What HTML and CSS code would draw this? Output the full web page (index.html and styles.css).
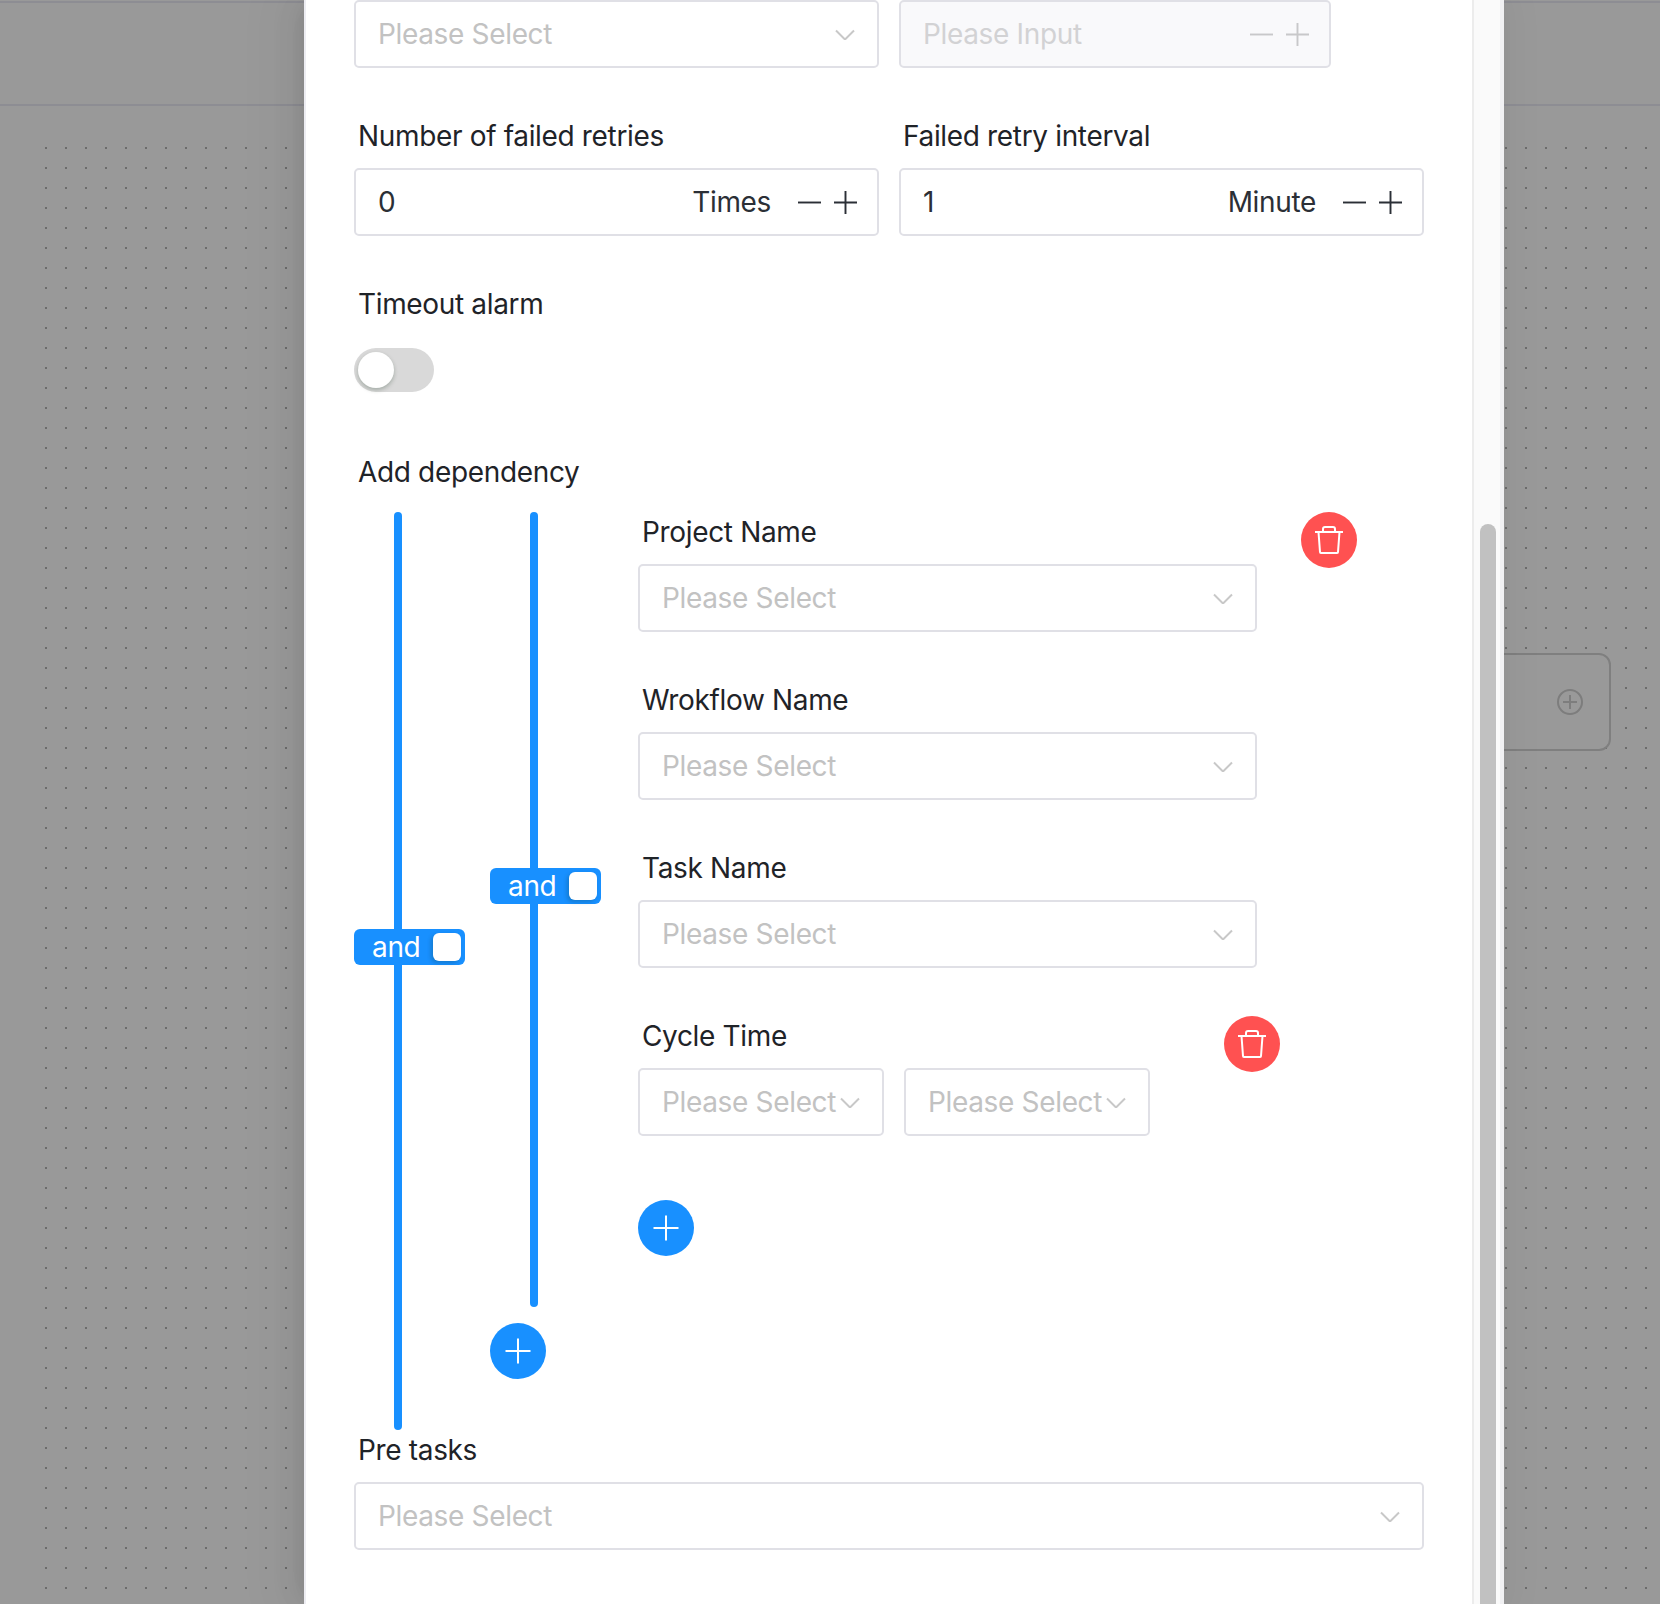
FILE: index.html
```
<!DOCTYPE html>
<html lang="en">
<head>
<meta charset="utf-8">
<title>Task dependency</title>
<link rel="stylesheet" href="styles.css">
</head>
<body>
<div class="scene">
  <div class="canvas">
    <div class="canvas-rule canvas-rule-top"></div>
    <div class="canvas-rule canvas-rule-bottom"></div>
    <div class="canvas-grid"></div>
    <div class="node">
      <svg class="node-add" viewBox="0 0 26 26"><circle cx="13" cy="13" r="12"/><path d="M13 6v14M6 13h14"/></svg>
    </div>
  </div>
  <div class="mask"></div>
  <div class="drawer">
    <div class="drawer-body">
      <div class="cols">
        <div class="select"><span class="ph">Please Select</span><svg class="chev" viewBox="0 0 20 10"><path d="M1 1l9 9 9-9"/></svg></div>
        <div class="stepper stepper-off"><span class="ph-off">Please Input</span><span class="steps"><svg class="step" viewBox="0 0 24 24"><path d="M0 12h24"/></svg><svg class="step" viewBox="0 0 24 24"><path d="M0 12h24M12 0v24"/></svg></span></div>
      </div>
      <div class="cols cols-next">
        <div class="field">
          <div class="label">Number of failed retries</div>
          <div class="stepper"><span class="val">0</span><span class="unit">Times</span><span class="steps"><svg class="step" viewBox="0 0 24 24"><path d="M0 12h24"/></svg><svg class="step" viewBox="0 0 24 24"><path d="M0 12h24M12 0v24"/></svg></span></div>
        </div>
        <div class="field">
          <div class="label">Failed retry interval</div>
          <div class="stepper"><span class="val">1</span><span class="unit">Minute</span><span class="steps"><svg class="step" viewBox="0 0 24 24"><path d="M0 12h24"/></svg><svg class="step" viewBox="0 0 24 24"><path d="M0 12h24M12 0v24"/></svg></span></div>
        </div>
      </div>
      <div class="field field-gap">
        <div class="label">Timeout alarm</div>
        <div class="toggle-row"><div class="toggle"><span class="toggle-knob"></span></div></div>
      </div>
      <div class="label label-dep">Add dependency</div>
      <div class="dep">
        <div class="rail rail-outer">
          <div class="rail-line"></div>
          <div class="badge"><span>and</span><span class="badge-knob"></span></div>
        </div>
        <div class="dep-main">
          <div class="dep">
            <div class="rail rail-inner">
              <div class="rail-line"></div>
              <div class="badge"><span>and</span><span class="badge-knob"></span></div>
            </div>
            <div class="rules">
              <div class="rule">
                <div class="rule-fields">
                  <div class="field field-gap">
                    <div class="label label-first">Project Name</div>
                    <div class="select"><span class="ph">Please Select</span><svg class="chev" viewBox="0 0 20 10"><path d="M1 1l9 9 9-9"/></svg></div>
                  </div>
                  <div class="field field-gap">
                    <div class="label">Wrokflow Name</div>
                    <div class="select"><span class="ph">Please Select</span><svg class="chev" viewBox="0 0 20 10"><path d="M1 1l9 9 9-9"/></svg></div>
                  </div>
                  <div class="field field-gap">
                    <div class="label">Task Name</div>
                    <div class="select"><span class="ph">Please Select</span><svg class="chev" viewBox="0 0 20 10"><path d="M1 1l9 9 9-9"/></svg></div>
                  </div>
                </div>
                <button class="round round-del" type="button"><svg viewBox="0 0 56 56"><path d="M14 20h28M22 20v-3q0-2 2-2h8q2 0 2 2v3M17.500 20l1.500 20q0 1 1 1h16q1 0 1-1l1.500-20"/></svg></button>
              </div>
              <div class="rule rule-cycle">
                <div class="field field-gap">
                  <div class="label">Cycle Time</div>
                  <div class="pair">
                    <div class="select select-small"><span class="ph">Please Select</span><svg class="chev" viewBox="0 0 20 10"><path d="M1 1l9 9 9-9"/></svg></div>
                    <div class="select select-small"><span class="ph">Please Select</span><svg class="chev" viewBox="0 0 20 10"><path d="M1 1l9 9 9-9"/></svg></div>
                  </div>
                </div>
                <button class="round round-del round-del-cycle" type="button"><svg viewBox="0 0 56 56"><path d="M14 20h28M22 20v-3q0-2 2-2h8q2 0 2 2v3M17.500 20l1.500 20q0 1 1 1h16q1 0 1-1l1.500-20"/></svg></button>
              </div>
              <button class="round round-add round-add-inner" type="button"><svg viewBox="0 0 56 56"><path d="M15.500 28h25M28 15.500v25"/></svg></button>
            </div>
          </div>
          <button class="round round-add round-add-outer" type="button"><svg viewBox="0 0 56 56"><path d="M15.500 28h25M28 15.500v25"/></svg></button>
        </div>
      </div>
      <div class="field">
        <div class="label label-first">Pre tasks</div>
        <div class="select"><span class="ph">Please Select</span><svg class="chev" viewBox="0 0 20 10"><path d="M1 1l9 9 9-9"/></svg></div>
      </div>
    </div>
    <div class="scrollbar"><div class="scrollbar-thumb"></div></div>
  </div>
</div>
</body>
</html>
```
FILE: styles.css
```
* { box-sizing: border-box; }
html, body { margin: 0; padding: 0; }
body { background: #fff; font-family: Inter, "Noto Sans", sans-serif; color: #1f2328; font-size: 28px; letter-spacing: -.34px; }

.scene { position: relative; width: 1660px; height: 1604px; overflow: hidden; }
.canvas { position: absolute; inset: 0; background: #fff; }
.canvas-rule { position: absolute; left: 0; right: 0; height: 2px; background: #ececf6; }
.canvas-rule-top { top: 1px; }
.canvas-rule-bottom { top: 104px; }
.canvas-grid {
  position: absolute; left: 45px; top: 147px; right: 0; bottom: 0;
  background: repeating-linear-gradient(90deg, #b4b4b4 0 2px, transparent 2px 20px);
  -webkit-mask-image: repeating-linear-gradient(180deg, #000 0 2px, transparent 2px 20px);
  mask-image: repeating-linear-gradient(180deg, #000 0 2px, transparent 2px 20px);
}
.node {
  position: absolute; left: 1400px; top: 653px; width: 211px; height: 98px;
  background: #fff; border: 2px solid #d4d4d4; border-radius: 12px;
}
.node-add { position: absolute; right: 26px; top: 34px; width: 26px; height: 26px; fill: none; stroke: #d0d0d0; stroke-width: 2; }
.mask { position: absolute; inset: 0; background: rgba(0, 0, 0, .4); }

.drawer {
  position: absolute; left: 304px; top: 0; width: 1200px; height: 1604px;
  display: flex; background: #fff;
  box-shadow: -6px 0 16px -8px rgba(0,0,0,.08), -9px 0 28px rgba(0,0,0,.05), -12px 0 48px 16px rgba(0,0,0,.03);
}
.drawer-body { width: 1168px; padding: 0 48px; border-left: 2px solid #ededf2; }
.scrollbar { width: 32px; background: #fafafa; border-left: 2px solid #ececec; border-right: 4px solid #f1f1f3; padding: 524px 4px 0 6px; }
.scrollbar-thumb { height: 100%; background: #c1c1c1; border-radius: 8px 8px 0 0; }

.cols { display: grid; grid-template-columns: 525px 525px; column-gap: 20px; }
.cols-next { margin-top: 32px; margin-bottom: 32px; }
.field-gap { margin-bottom: 32px; }

.label { padding: 18px 4px 14px; line-height: 36px; height: 68px; color: #1f2328; white-space: nowrap; }
.label-first { padding-top: 2px; height: 52px; }
.label-dep { margin-bottom: 8px; }

.select, .stepper {
  height: 68px; border: 2px solid #e0e0e6; border-radius: 5px; background: #fff;
  display: flex; align-items: center;
}
.select { justify-content: space-between; padding: 0 22px 0 22px; }
.stepper { padding: 0 20px 0 22px; color: #2b2f36; }
.ph { color: #c2c2c2; white-space: nowrap; }
.chev { width: 20px; height: 11px; fill: none; stroke: #c8c8c8; stroke-width: 2; flex: none; }
.select-small { width: 246px; flex: none; }
.pair { display: flex; gap: 20px; }

.val { flex: 1; }
.unit { margin-right: 27px; }
.steps { display: flex; gap: 13px; }
.step { width: 23px; height: 23px; fill: none; stroke: #2b2f36; stroke-width: 2; }
.stepper-off { width: 432px; background: #f9f9fb; justify-content: space-between; }
.ph-off { color: #d2d2d4; }
.stepper-off .step { stroke: #c8c8ca; }

.toggle-row { height: 68px; display: flex; align-items: center; }
.toggle { width: 80px; height: 44px; border-radius: 22px; background: #d9d9d9; padding: 4px; }
.toggle-knob { display: block; width: 36px; height: 36px; border-radius: 50%; background: #fff; box-shadow: 0 2px 4px rgba(0, 35, 11, .25); }

.dep { display: flex; }
.rail { position: relative; flex: none; }
.rail-outer { width: 136px; }
.rail-inner { width: 148px; }
.rail-line { width: 8px; height: 100%; margin-left: 40px; background: #1890ff; border-radius: 4px; }
.badge {
  position: absolute; left: 0; top: calc(50% - 42px);
  width: 111px; height: 36px; padding: 0 4px 0 18px;
  display: flex; align-items: center; justify-content: space-between;
  background: #1890ff; color: #fff; border-radius: 6px; line-height: 36px;
}
.badge-knob { width: 28px; height: 28px; background: #fff; border-radius: 6px; box-shadow: -2px 2px 4px rgba(0, 35, 11, .2); }

.dep-main { flex: 1; }
.rules { flex: 1; padding-bottom: 51px; }
.rule { display: flex; align-items: flex-start; }
.rule-fields { width: 619px; }
.rule-cycle .field { width: 512px; }

.round { display: block; width: 56px; height: 56px; padding: 0; border: 0; border-radius: 50%; flex: none; }
.round svg { display: block; width: 56px; height: 56px; fill: none; stroke: #fff; stroke-width: 2; }
.round-del { background: #ff5151; margin-left: 44px; }
.round-del-cycle { margin: 16px 0 0 74px; }
.round-add { background: #1890ff; }
.round-add-inner { margin-top: 32px; }
.round-add-outer { margin-top: 16px; margin-bottom: 51px; }
```
